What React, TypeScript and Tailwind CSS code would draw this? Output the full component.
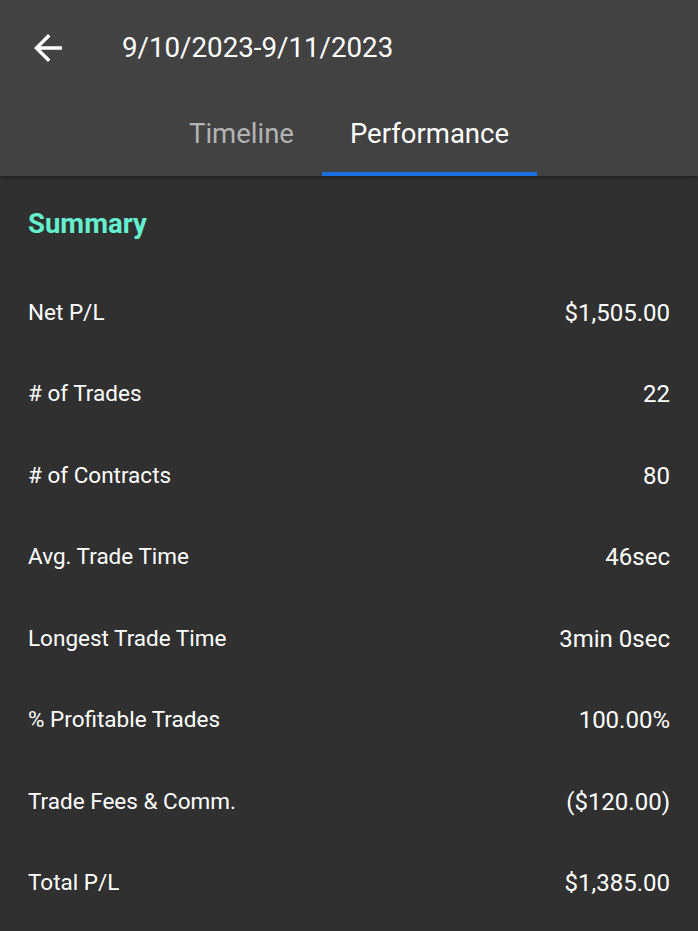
import React from "react";

const rows: [string, string][] = [
  ["Net P/L", "$1,505.00"],
  ["# of Trades", "22"],
  ["# of Contracts", "80"],
  ["Avg. Trade Time", "46sec"],
  ["Longest Trade Time", "3min 0sec"],
  ["% Profitable Trades", "100.00%"],
  ["Trade Fees & Comm.", "($120.00)"],
  ["Total P/L", "$1,385.00"],
];

export default function App() {
  return (
    <div
      className="w-[698px] h-[931px] bg-[#303030] text-white overflow-hidden"
      style={{ fontFamily: "Roboto, 'Liberation Sans', sans-serif" }}
    >
      <div className="bg-[#424242] h-[176px] flex flex-col relative shadow-[0_2px_4px_rgba(0,0,0,0.35)]">
        <div className="h-[94px] flex items-center pt-[2px]">
          <div className="w-[122px] flex items-center pl-[27px]">
            <svg width="42" height="42" viewBox="0 0 24 24" fill="none">
              <path d="M20 11H7.83l5.59-5.59L12 4l-8 8 8 8 1.41-1.41L7.83 13H20v-2z" fill="#fff" />
            </svg>
          </div>
          <div className="text-[27.7px] leading-none text-white">9/10/2023-9/11/2023</div>
        </div>
        <div className="flex-1 flex justify-center">
          <div className="px-[28px] h-full flex items-center pb-[3px] text-[27.5px] text-[#b3b3b3]">Timeline</div>
          <div className="px-[28px] h-full flex items-center pb-[3px] text-[27.5px] text-white relative">
            Performance
            <div className="absolute left-0 right-0 bottom-0 h-[4px] bg-[#1c6fe0]" />
          </div>
        </div>
      </div>
      <div className="px-[28px]">
        <div className="mt-[32px] h-[32px] flex items-center text-[27.5px] font-bold text-[#64f0cf]">Summary</div>
        <div className="mt-[32px] flex flex-col">
          {rows.map(([k, v]) => (
            <div key={k} className="h-[81.5px] flex items-center justify-between">
              <span className="text-[22.5px]">{k}</span>
              <span className="text-[24px]">{v}</span>
            </div>
          ))}
        </div>
      </div>
    </div>
  );
}
